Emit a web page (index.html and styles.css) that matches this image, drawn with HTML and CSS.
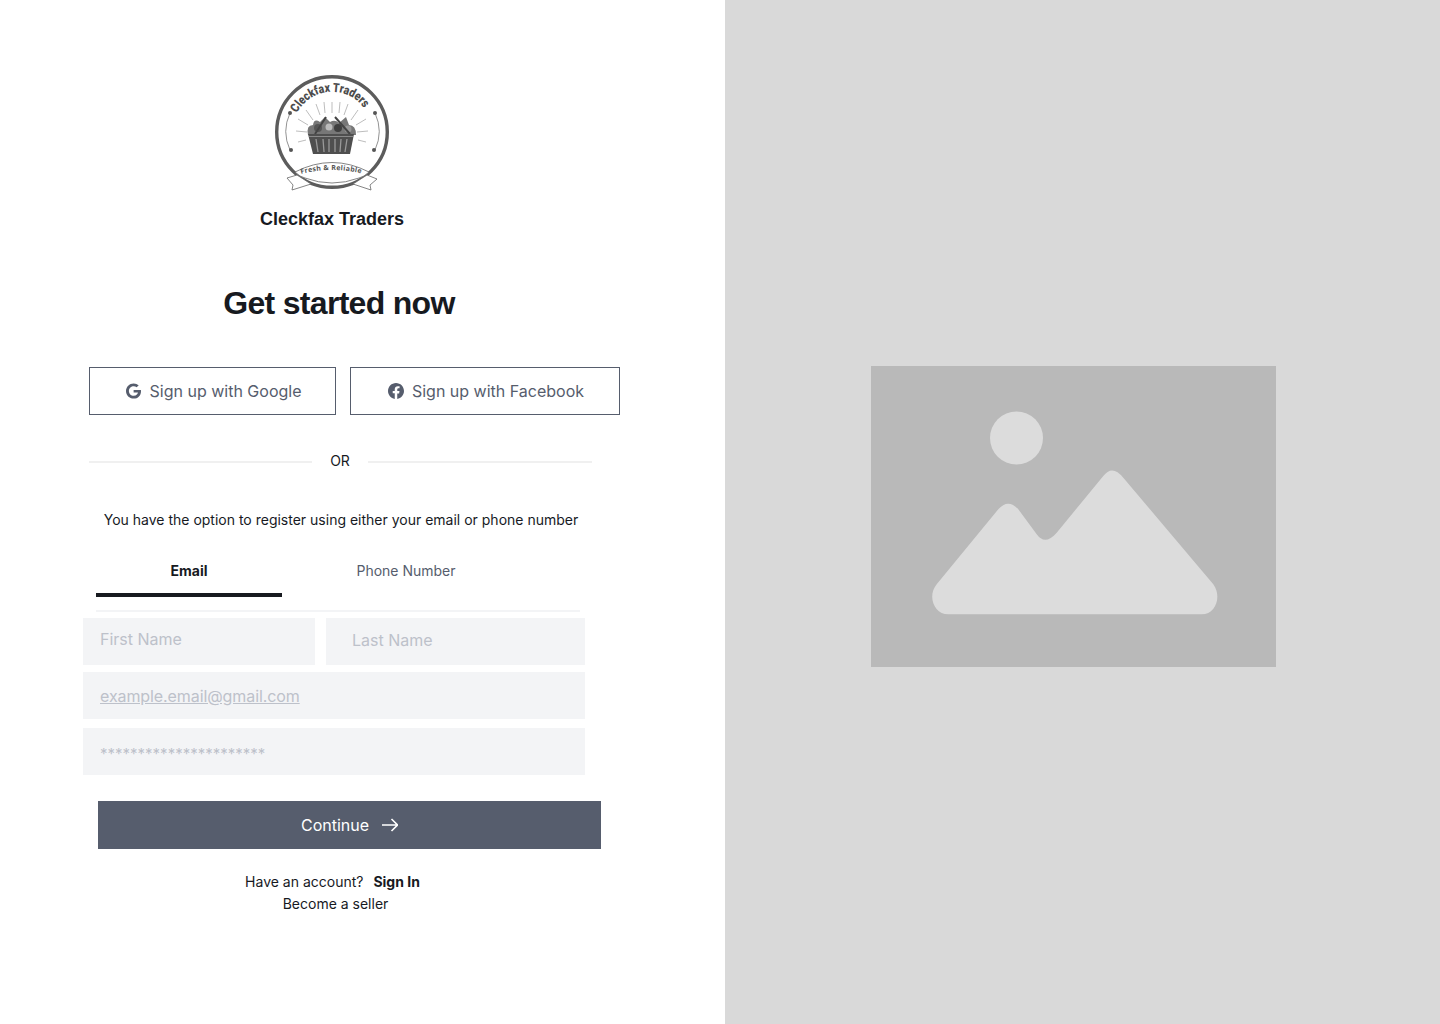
FILE: index.html
```html
<!DOCTYPE html>
<html lang="en">
<head>
    <meta charset="UTF-8">
    <meta name="viewport" content="width=device-width, initial-scale=1.0">
    <title>Cleckfax Traders - Sign up</title>
    <link rel="stylesheet" href="styles.css">
</head>
<body>
    <div class="page">
        <main class="signup">
            <div class="brand">
                <svg class="brand-logo" width="114" height="118" viewBox="0 0 114 118">
                    <defs>
                        <path id="topArc" d="M22 38 A39.500 39.500 0 0 1 92 38"/>
                        <path id="ribbonArc" d="M26 99 Q57 91 89 99"/>
                    </defs>
                    <circle cx="57" cy="57" r="55.300" fill="#fff" stroke="#5c5c5c" stroke-width="3.400"/>
                    <text class="logo-title"><textPath href="#topArc" textLength="80" lengthAdjust="spacingAndGlyphs">Cleckfax Traders</textPath></text>
                    <g fill="none" stroke="#777" stroke-width="0.800">
                        <path d="M15 38 A44 44 0 0 0 15 75"/>
                        <path d="M100 38 A44 44 0 0 1 100 75"/>
                    </g>
                    <!-- rays round the basket -->
                    <g fill="none" stroke="#a0a0a0" stroke-width="0.700">
                        <path d="M57 27V38M49 27L50 38M65 27L64 38M41 29L45 40M73 29L69 40M31 35L38 45M83 35L76 45M23 44L33 50M91 44L81 50M21 56L32 57M93 56L82 57M23 67L31 65M91 67L83 65"/>
                    </g>
                    <g fill="#555">
                        <circle cx="15" cy="38" r="2"/>
                        <circle cx="100" cy="38" r="2"/>
                        <circle cx="16" cy="75" r="2"/>
                        <circle cx="99" cy="75" r="2"/>
                    </g>
                    <!-- produce -->
                    <path d="M33 60Q31 50 38 50Q39 43 45 47L50 42L55 47Q60 44 64 48L71 42L74 50Q81 50 81 60Z" fill="#777"/>
                    <circle cx="43" cy="53" r="4" fill="#555"/>
                    <circle cx="54" cy="52" r="3.500" fill="#bbb"/>
                    <circle cx="63" cy="53" r="4" fill="#3f3f3f"/>
                    <circle cx="73" cy="54" r="3.500" fill="#999"/>
                    <path d="M40 59L51 42M75 59L60 42" stroke="#444" stroke-width="2" fill="none"/>
                    <!-- basket -->
                    <path d="M33 59H79L75 79H38Z" fill="#4f4f4f"/>
                    <path d="M41 64L43 77M48 64L49 77M54 64V77M60 64V77M66 64L65 77M72 64L70 77" stroke="#999" stroke-width="1.300" fill="none"/>
                    <path d="M34 61.500H78" stroke="#8a8a8a" stroke-width="1"/>
                    <!-- ribbon -->
                    <path d="M22 100L12 103L18 110L17 115L36 109Z" fill="#fff" stroke="#666" stroke-width="0.800"/>
                    <path d="M92 100L102 104L95 110L96 115L78 109Z" fill="#fff" stroke="#666" stroke-width="0.800"/>
                    <path d="M20 97Q57 78 94 97Q89 102 84 103Q57 113 30 103Q25 102 20 97Z" fill="#fff" stroke="#666" stroke-width="0.800"/>
                    <text class="logo-ribbon"><textPath href="#ribbonArc">Fresh &amp; Reliable</textPath></text>
                </svg>
                <div class="brand-name">Cleckfax Traders</div>
            </div>

            <h1 class="title">Get started now</h1>

            <div class="social">
                <button class="social-btn social-google" type="button">
                    <svg width="15" height="16" viewBox="0 0 488 512"><path fill="#565d6d" d="M488 261.800C488 403.300 391.100 504 248 504 110.800 504 0 393.200 0 256S110.800 8 248 8c66.800 0 123 24.500 166.300 64.900l-67.500 64.900C258.500 52.600 94.300 116.600 94.300 256c0 86.500 69.100 156.600 153.700 156.600 98.200 0 135-70.400 140.800-106.900H248v-85.300h236.100c2.300 12.700 3.900 24.900 3.900 41.400z"/></svg>
                    Sign up with Google
                </button>
                <button class="social-btn social-facebook" type="button">
                    <svg width="16" height="16" viewBox="0 0 16 16"><path fill="#565d6d" d="M16 8.050C16 3.600 12.420 0 8 0S0 3.600 0 8.050c0 4.020 2.930 7.350 6.750 7.950v-5.630H4.720V8.050h2.030V6.280c0-2.020 1.190-3.130 3.020-3.130.88 0 1.790.16 1.790.16v1.980h-1.010c-.99 0-1.300.62-1.300 1.260v1.510h2.220l-.36 2.320H9.250V16C13.070 15.400 16 12.070 16 8.050z"/></svg>
                    Sign up with Facebook
                </button>
            </div>

            <div class="divider">
                <span class="divider-line"></span>
                <span class="divider-text">OR</span>
                <span class="divider-line divider-line-right"></span>
            </div>

            <p class="note">You have the option to register using either your email or phone number</p>

            <div class="tabs">
                <div class="tab tab-active">Email</div>
                <div class="tab">Phone Number</div>
            </div>

            <form class="signup-form">
                <div class="name-row">
                    <input class="field field-first" type="text" placeholder="First Name">
                    <input class="field field-last" type="text" placeholder="Last Name">
                </div>
                <input class="field field-email" type="text" placeholder="example.email@gmail.com">
                <input class="field field-password" type="text" placeholder="**********************">
                <button class="continue-btn" type="button">
                    Continue
                    <svg width="16" height="16" viewBox="0 0 16 16" fill="none" stroke="#fff" stroke-width="1.600"><path d="M0 8H15M9.500 2L15.500 8L9.500 14"/></svg>
                </button>
            </form>

            <div class="account">Have an account? <a class="sign-in" href="#">Sign In</a></div>
            <div class="seller">Become a seller</div>
        </main>

        <aside class="hero">
            <div class="hero-image">
                <svg width="405" height="301" viewBox="0 0 405 301">
                    <circle cx="145.500" cy="72" r="26.500" fill="#dcdcdc"/>
                    <path fill="#dcdcdc" d="M77.300 248.300H330.700C345 248.300 351 230 342.300 218.300L252.300 111.700Q241.300 98 232.300 110L185.700 166.700Q174 180 165.700 168.300L147.300 143.300Q137 132 127.300 143.300L65.700 218.300C56 230 63 248.300 77.300 248.300Z"/>
                </svg>
            </div>
        </aside>
    </div>
</body>
</html>
```

FILE: styles.css
```css
* {
    box-sizing: border-box;
}
body {
    margin: 0;
    font-family: 'Inter', sans-serif;
    color: #171a1f;
    background-color: #fff;
}
.page {
    display: flex;
    min-height: 1024px;
}
.signup {
    width: 725px;
    flex-shrink: 0;
    padding-top: 75px;
    display: flex;
    flex-direction: column;
}

/* Brand */
.brand {
    width: 664px;
    display: flex;
    flex-direction: column;
    align-items: center;
}
.brand-logo {
    display: block;
}
.logo-title {
    font-family: 'Roboto', sans-serif;
    font-size: 12.500px;
    font-weight: 900;
    fill: #4c4c4c;
}
.logo-ribbon {
    font-family: 'Open Sans', sans-serif;
    font-size: 7px;
    font-weight: 700;
    letter-spacing: 0.300px;
    fill: #555;
}
.brand-name {
    margin-top: 14px;
    font-family: 'Liberation Sans', sans-serif;
    font-size: 18px;
    line-height: 24px;
    font-weight: 700;
}
.title {
    width: 678px;
    margin: 48px 0 0;
    text-align: center;
    font-family: 'Liberation Sans', sans-serif;
    font-size: 32px;
    line-height: 48px;
    font-weight: 700;
    letter-spacing: -0.700px;
}

/* Social buttons */
.social {
    display: flex;
    gap: 14px;
    margin: 40px 0 0 89px;
}
.social-btn {
    height: 48px;
    padding: 0 0 0 2px;
    display: flex;
    align-items: center;
    justify-content: center;
    gap: 8px;
    font-family: 'Inter', sans-serif;
    font-size: 16px;
    color: #565d6d;
    background-color: #fff;
    border: 1px solid #565d6d;
}
.social-google {
    width: 247px;
    gap: 9px;
}
.social-facebook {
    width: 270px;
}

/* OR divider */
.divider {
    width: 503px;
    margin: 37px 0 0 89px;
    display: flex;
    align-items: center;
    height: 20px;
    font-size: 14px;
}
.divider-line {
    width: 223px;
    height: 2px;
    background-color: #f0f0f0;
}
.divider-line-right {
    width: 224px;
}
.divider-text {
    width: 56px;
    margin-top: -4px;
    text-align: center;
}
.note {
    width: 682px;
    margin: 37px 0 0;
    text-align: center;
    font-size: 14px;
    line-height: 22px;
}

/* Tabs */
.tabs {
    width: 484px;
    height: 65px;
    margin: 16px 0 0 96px;
    display: flex;
    border-bottom: 2px solid #f3f4f6;
}
.tab {
    width: 248px;
    height: 50px;
    padding-top: 13px;
    text-align: center;
    font-size: 14px;
    line-height: 22px;
    color: #565d6d;
}
.tab-active {
    width: 186px;
    font-weight: 700;
    color: #171a1f;
    border-bottom: 4px solid #171a1f;
}

/* Form */
.signup-form {
    width: 518px;
    margin: 6px 0 0 83px;
    display: flex;
    flex-direction: column;
}
.name-row {
    display: flex;
    gap: 11px;
}
.field {
    height: 47px;
    padding: 0 17px;
    border: none;
    border-radius: 0;
    font-family: 'Inter', sans-serif;
    font-size: 16px;
    background-color: #f3f4f6;
    outline: none;
}
.field::placeholder {
    color: #bdc1ca;
    opacity: 1;
}
.field-first {
    width: 232px;
    padding-bottom: 5px;
}
.field-last {
    width: 259px;
    padding-left: 26px;
    padding-bottom: 3px;
}
.field-email {
    width: 502px;
    margin-top: 7px;
    letter-spacing: -0.090px;
}
.field-email::placeholder {
    text-decoration: underline;
}
.field-password {
    width: 502px;
    margin-top: 9px;
    padding-top: 4px;
    font-size: 15px;
}
.continue-btn {
    width: 503px;
    height: 48px;
    margin: 26px 0 0 15px;
    display: flex;
    align-items: center;
    justify-content: center;
    gap: 13px;
    font-family: 'Inter', sans-serif;
    font-size: 16px;
    color: #fff;
    background-color: #565d6d;
    border: none;
}
.account {
    width: 665px;
    margin-top: 22px;
    text-align: center;
    font-size: 14px;
    line-height: 22px;
}
.sign-in {
    margin-left: 6px;
    font-weight: 700;
    color: #171a1f;
    text-decoration: none;
}
.seller {
    width: 671px;
    text-align: center;
    font-size: 14px;
    line-height: 22px;
}

/* Right side picture */
.hero {
    flex: 1;
    display: flex;
    align-items: center;
    justify-content: center;
    padding: 9px 18px 0 0;
    background-color: #d9d9d9;
}
.hero-image {
    width: 405px;
    height: 301px;
    background-color: #b9b9b9;
}
.hero-image svg {
    display: block;
}
```
